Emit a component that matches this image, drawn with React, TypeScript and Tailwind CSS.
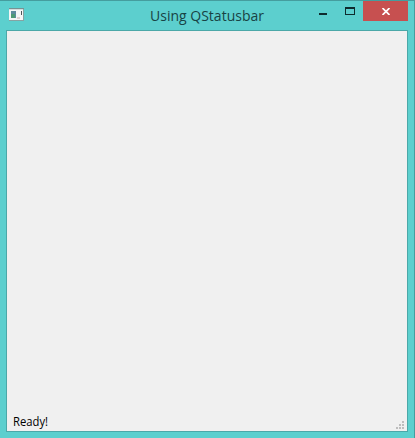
function WindowIcon() {
  return (
    <svg width="16" height="14" viewBox="0 0 16 14" shapeRendering="crispEdges" aria-hidden="true">
      <rect x="1" y="0" width="15" height="13" fill="#87a3a3" />
      <rect x="1" y="2" width="14" height="10" fill="#f4f6f6" />
      <rect x="1" y="0" width="15" height="1" fill="#779292" />
      <rect x="1" y="1" width="14" height="1" fill="#d4dcdc" />
      <rect x="3" y="3" width="5" height="7" fill="#5d8c9d" />
      <rect x="3" y="6" width="4" height="4" fill="#4d9a75" />
      <rect x="9" y="9" width="3" height="2" fill="#dfd0d2" />
      <rect x="13" y="3" width="1" height="4" fill="#4c5558" />
    </svg>
  );
}

function TitleBar() {
  return (
    <header className="flex h-[29px] shrink-0 items-start pr-[6px] pl-2">
      <div className="w-[142px] pt-[7px]">
        <WindowIcon />
      </div>
      <h1 className="h-[29px] w-[114px] whitespace-nowrap text-[#184344]">
        <svg width="116" height="29" className="overflow-visible">
          <text x="0" y="20" fontSize="15" textLength="114" lengthAdjust="spacingAndGlyphs" fill="currentColor">
            Using QStatusbar
          </text>
        </svg>
      </h1>
      <div className="ml-auto flex h-5">
        <button aria-label="Minimize" className="flex w-[27px] items-start pt-3 pl-[10px]">
          <span className="h-0.5 w-2 bg-[#0e2c2e]" />
        </button>
        <button aria-label="Maximize" className="flex w-[27px] items-start pt-[6px] pl-[9px]">
          <span className="h-2 w-[10px] border border-t-2 border-[#0e2c2e]" />
        </button>
        <button aria-label="Close" className="flex w-[45px] items-start bg-[#c75050] pt-[7px] pl-[19px]">
          <svg width="8" height="7" viewBox="0 0 8 7">
            <path d="M.5 0 7.5 7M7.5 0 .5 7" stroke="white" strokeWidth="1.7" />
          </svg>
        </button>
      </div>
    </header>
  );
}

function SizeGrip() {
  return (
    <svg width="8" height="8" viewBox="0 0 8 8" fill="#bdbdbd" shapeRendering="crispEdges" aria-hidden="true">
      <path d="M6 0h2v2H6zM3 3h2v2H3zM6 3h2v2H6zM0 6h2v2H0zM3 6h2v2H3zM6 6h2v2H6z" />
    </svg>
  );
}

export default function App() {
  return (
    <div className="flex h-[438px] w-[415px] flex-col border-t border-r border-[#459d9e] bg-[#5ccfce] font-['Open_Sans',sans-serif]">
      <TitleBar />
      <main className="mr-[6px] mb-[6px] ml-[6px] flex flex-1 flex-col border border-[#4ba8a8] bg-[#f0f0f0]">
        <div className="flex-1" />
        <footer className="flex h-[19px] items-start justify-between pr-[3px] pl-[6px] text-black">
          <svg width="36" height="19" className="overflow-visible">
            <text x="0" y="14" fontSize="12" textLength="35" lengthAdjust="spacingAndGlyphs">Ready!</text>
          </svg>
          <div className="pt-[9px]">
            <SizeGrip />
          </div>
        </footer>
      </main>
    </div>
  );
}
